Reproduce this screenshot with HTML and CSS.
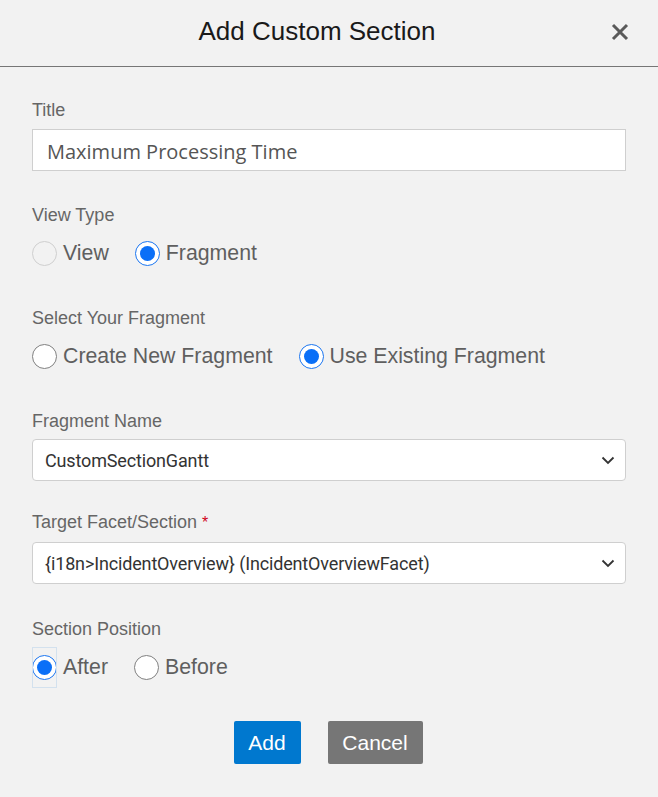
FILE: index.html
```html
<!DOCTYPE html>
<html>
<head>
<meta charset="utf-8">
<link rel="stylesheet" href="styles.css">
</head>
<body>
<div class="dialog">
  <header class="head">
    <h1 class="head-title">Add Custom Section</h1>
    <button class="close" aria-label="Close">
      <svg width="18" height="18" viewBox="0 0 18 18"><path d="M2 2L16 16M16 2L2 16" stroke="#5a5a5a" stroke-width="3" fill="none"/></svg>
    </button>
  </header>
  <main class="body">
    <div class="group g-input">
      <div class="label">Title</div>
      <div class="input">Maximum Processing Time</div>
    </div>
    <div class="group g-radio">
      <div class="label">View Type</div>
      <div class="radios">
        <label class="opt"><span class="radio disabled"></span><span class="opt-text">View</span></label>
        <label class="opt"><span class="radio checked"></span><span class="opt-text">Fragment</span></label>
      </div>
    </div>
    <div class="group g-radio2">
      <div class="label">Select Your Fragment</div>
      <div class="radios">
        <label class="opt"><span class="radio"></span><span class="opt-text">Create New Fragment</span></label>
        <label class="opt"><span class="radio checked"></span><span class="opt-text">Use Existing Fragment</span></label>
      </div>
    </div>
    <div class="group g-select">
      <div class="label">Fragment Name</div>
      <div class="select"><span class="select-text">CustomSectionGantt</span>
        <svg class="chev" width="14" height="9" viewBox="0 0 14 9"><path d="M1.5 1.5L7 7L12.5 1.5" stroke="#333" stroke-width="1.8" fill="none"/></svg>
      </div>
    </div>
    <div class="group g-select2">
      <div class="label">Target Facet/Section <span class="req">*</span></div>
      <div class="select"><span class="select-text">{i18n&gt;IncidentOverview} (IncidentOverviewFacet)</span>
        <svg class="chev" width="14" height="9" viewBox="0 0 14 9"><path d="M1.5 1.5L7 7L12.5 1.5" stroke="#333" stroke-width="1.8" fill="none"/></svg>
      </div>
    </div>
    <div class="group g-radio3">
      <div class="label">Section Position</div>
      <div class="radios">
        <label class="opt"><span class="radio checked focused"></span><span class="opt-text">After</span></label>
        <label class="opt"><span class="radio"></span><span class="opt-text">Before</span></label>
      </div>
    </div>
    <div class="actions">
      <button class="btn btn-add">Add</button>
      <button class="btn btn-cancel">Cancel</button>
    </div>
  </main>
</div>
</body>
</html>
```

FILE: styles.css
```css
* { box-sizing: border-box; }
html, body { margin: 0; padding: 0; }
body {
  background: #f2f2f2;
  font-family: "Liberation Sans", Arial, sans-serif;
  width: 658px;
  height: 797px;
  overflow: hidden;
}
.dialog { width: 658px; }
.head {
  height: 67px;
  border-bottom: 1px solid #767676;
  display: flex;
  align-items: center;
  justify-content: center;
  padding-right: 24px;
  position: relative;
}
.head-title {
  margin: 0;
  font-weight: normal;
  font-size: 26px;
  color: #1a1a1a;
  margin-top: -3px;
}
.close {
  position: absolute;
  right: 29px;
  top: 23px;
  width: 18px;
  height: 18px;
  padding: 0;
  border: 0;
  background: transparent;
  display: flex;
}
.body { padding: 33px 32px 0 32px; }
.label {
  font-size: 18px;
  line-height: 20px;
  color: #666;
}
.req { color: #d0021b; font-size: 16px; }
.g-input .label { margin-bottom: 9px; }
.input {
  height: 42px;
  background: #fff;
  border: 1px solid #cfcfcf;
  font-family: "Open Sans", sans-serif;
  font-size: 20px;
  color: #555;
  padding: 3px 0 0 14px;
  display: flex;
  align-items: center;
}
.g-radio { margin-top: 34px; }
.g-radio2 { margin-top: 42px; }
.g-select { margin-top: 42px; }
.g-select2 { margin-top: 31px; }
.g-radio3 { margin-top: 35px; }
.g-radio .radios { margin-top: 16px; }
.g-radio3 .radios { margin-top: 16px; }
.g-radio2 .radios { margin-top: 16px; }
.g-select .label { margin-bottom: 8px; }
.g-select2 .label { margin-bottom: 9px; }
.radios { display: flex; height: 25px; }
.opt { display: flex; align-items: center; }
.opt + .opt { margin-left: 26px; }
.opt-text {
  font-size: 21.3px;
  color: #5f5f5f;
  margin-left: 6px;
}
.radio {
  width: 25px;
  height: 25px;
  border-radius: 50%;
  border: 1px solid #808080;
  background: #fff;
  position: relative;
  flex: none;
}
.radio.disabled { border-color: #cfcfcf; background: #f2f2f2; }
.radio.checked { border-color: #1a75f0; }
.radio.checked::before {
  content: "";
  position: absolute;
  left: 4px; top: 4px;
  width: 15px; height: 15px;
  border-radius: 50%;
  background: #0a6ff7;
}
.radio.focused::after {
  content: "";
  position: absolute;
  left: -1px; right: -1px;
  top: -9px; bottom: -9px;
  border: 1px solid #d3e1ee;
}
.select {
  height: 42px;
  background: #fff;
  border: 1px solid #cfcfcf;
  border-radius: 4px;
  display: flex;
  align-items: center;
  padding: 0 10px 0 12px;
}
.select-text {
  flex: 1;
  font-family: "Roboto", sans-serif;
  font-size: 18px;
  letter-spacing: -0.15px;
  color: #333;
}
.chev { flex: none; }
.actions {
  margin-top: 41px;
  display: flex;
  justify-content: center;
  gap: 27px;
  padding-right: 2px;
}
.btn {
  height: 43px;
  border: 0;
  border-radius: 2px;
  color: #fff;
  font-family: "Liberation Sans", Arial, sans-serif;
  font-size: 21px;
  padding: 0;
}
.btn-add { width: 67px; background: #0078cf; }
.btn-cancel { width: 95px; background: #767676; }
```
